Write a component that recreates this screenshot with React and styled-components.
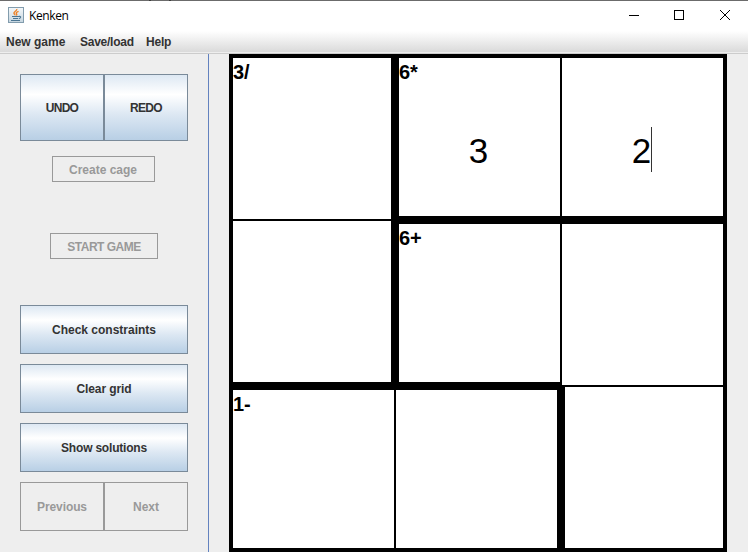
import React from "react";
import styled, { createGlobalStyle } from "styled-components";

const GlobalStyle = createGlobalStyle`
  * { box-sizing: border-box; }
  body { margin: 0; overflow: hidden; background: #eeeeee; }
`;

const Window = styled.div`
  width: 748px;
  height: 552px;
  display: flex;
  flex-direction: column;
  background: #eeeeee;
  font-family: "Liberation Sans", Arial, sans-serif;
  color: #333333;
`;

const TopEdge = styled.div`
  height: 1px;
  flex: none;
  background: linear-gradient(90deg, #6b6b6b 0 149px, #3c3c3c 149px 151px, #6b6b6b 151px 169px, #3c3c3c 169px 171px, #6b6b6b 171px);
`;

const TitleBar = styled.header`
  height: 30px;
  flex: none;
  display: flex;
  align-items: flex-start;
  padding: 6px 16px 0 8px;
  background: #ffffff;
`;

const Title = styled.span`
  flex: 1;
  margin-left: 5px;
  font: 12px/17px "Open Sans", "Noto Sans", sans-serif;
  letter-spacing: -0.4px;
  color: #000000;
`;

const Controls = styled.div`
  display: flex;
  gap: 35px;
  margin: 3px 2px 0 0;
  svg { display: block; }
  svg:last-child { margin-left: 1px; }
`;

const MenuBar = styled.nav`
  height: 23px;
  flex: none;
  display: flex;
  align-items: center;
  padding: 0 6px 1px;
  gap: 14px;
  font-size: 12px;
  font-weight: bold;
  background: linear-gradient(#ffffff, #dadada 21px, #eeeeee 21px 22px, #cccccc 22px);
`;

const MenuItem = styled.span`
  width: ${(p) => p.$width}px;
  letter-spacing: ${(p) => p.$tracking || 0}px;
  white-space: nowrap;
`;

const Body = styled.div`
  flex: 1;
  min-height: 0;
  display: flex;
`;

const Sidebar = styled.aside`
  width: 209px;
  padding: 20px 20px 0;
  border-right: 1px solid #6382bf;
  display: flex;
  flex-direction: column;
  align-items: flex-start;
`;

const ButtonRow = styled.div`
  display: flex;
  justify-content: center;
  width: ${(p) => p.$width || 168}px;
  margin-bottom: ${(p) => p.$after}px;
`;

const Button = styled.button`
  width: ${(p) => p.$width}px;
  height: ${(p) => p.$height}px;
  padding: ${(p) => p.$drop || 0}px ${(p) => p.$shift || 0}px 0 0;
  border: 1px solid #7a8a99;
  border-radius: 0;
  color: #333333;
  background: linear-gradient(#dde8f3 0%, #ffffff 30%, #dde8f3 60%, #b8cfe5 100%);
  font: bold 12px/14px "Liberation Sans", Arial, sans-serif;
  letter-spacing: ${(p) => p.$tracking || 0}px;
  white-space: nowrap;

  &:disabled {
    color: #999999;
    border-color: #999999;
    background: #eeeeee;
  }
`;

const Board = styled.main`
  margin-left: 20px;
  width: 498px;
  height: 498px;
  display: grid;
  grid-template: repeat(3, 166px) / repeat(3, 166px);
`;

const Cell = styled.div`
  position: relative;
  display: flex;
  align-items: center;
  justify-content: center;
  border: solid #000000;
  border-width: ${(p) => p.$walls.map((w) => `${w}px`).join(" ")};
  background: #ffffff;
`;

const CageLabel = styled.span`
  position: absolute;
  top: 3px;
  left: 0;
  font: bold 20px/23px "Liberation Sans", Arial, sans-serif;
  color: #000000;
`;

const Digit = styled.span`
  position: relative;
  margin-top: 26px;
  padding-top: 1px;
  margin-right: 2px;
  font-size: 35px;
  line-height: 44px;
  color: #000000;
`;

const Caret = styled.i`
  position: absolute;
  top: -1px;
  right: -1px;
  width: 1px;
  height: 45px;
  background: #333333;
`;

const cages = [
  [0, 1, 1],
  [0, 2, 2],
  [3, 3, 2],
];
const labels = { "0,0": "3/", "0,1": "6*", "1,1": "6+", "2,0": "1-" };
const values = { "0,1": "3", "0,2": "2" };
const active = "0,2";

const wallsOf = (r, c) =>
  [[r - 1, c], [r, c + 1], [r + 1, c], [r, c - 1]].map(([y, x]) =>
    cages[y]?.[x] === cages[r][c] ? 1 : 4
  );

const actions = [
  { text: "Check constraints", tracking: 0 },
  { text: "Clear grid", tracking: -0.1 },
  { text: "Show solutions", tracking: -0.2 },
];

function JavaIcon() {
  return (
    <svg width="16" height="16" viewBox="0 0 16 16">
      <defs>
        <linearGradient id="tile" x1="0" y1="0" x2="0" y2="1">
          <stop offset="0" stopColor="#f5f8fa" />
          <stop offset="1" stopColor="#c5d5df" />
        </linearGradient>
      </defs>
      <rect x=".5" y=".5" width="15" height="15" fill="url(#tile)" stroke="#829cad" />
      <path d="M8.8 2C9.2 4 5.4 4.6 6 6.4C6.4 7.2 7.2 7.5 7 8.4M10.6 4.4C8.2 5.2 7.8 6 8.6 7C9 7.6 8.8 8 8.4 8.5" fill="none" stroke="#ee8226" strokeWidth="1.4" />
      <path d="M4 9.5H10.5M5 11.5H10M3 13.5H12M10.5 9.5C13.5 8.7 13.3 11 10.8 11.7" fill="none" stroke="#4b7592" strokeWidth="1.1" />
    </svg>
  );
}

function WindowControls() {
  return (
    <Controls>
      <svg width="10" height="10" stroke="#000" fill="none"><path d="M0 5.5H10" /></svg>
      <svg width="10" height="10" stroke="#000" fill="none"><rect x=".5" y=".5" width="9" height="9" /></svg>
      <svg width="10" height="10" stroke="#000" fill="none"><path d="M0 0L10 10M10 0L0 10" /></svg>
    </Controls>
  );
}

export default function App() {
  return (
    <Window>
      <GlobalStyle />
      <TopEdge />
      <TitleBar>
        <JavaIcon />
        <Title>Kenken</Title>
        <WindowControls />
      </TitleBar>
      <MenuBar>
        <MenuItem $width={60}>New game</MenuItem>
        <MenuItem $width={52} $tracking={-0.25}>Save/load</MenuItem>
        <MenuItem $width={26} $tracking={-0.2}>Help</MenuItem>
      </MenuBar>
      <Body>
        <Sidebar>
          <ButtonRow $after={15}>
            <Button $width={84} $height={67} $tracking={-0.7}>UNDO</Button>
            <Button $width={84} $height={67} $tracking={-0.7}>REDO</Button>
          </ButtonRow>
          <ButtonRow $after={51} $width={167}>
            <Button $width={103} $height={26} $drop={1} $shift={1} disabled>Create cage</Button>
          </ButtonRow>
          <ButtonRow $after={46}>
            <Button $width={108} $height={26} $drop={1} $tracking={-0.5} disabled>START GAME</Button>
          </ButtonRow>
          {actions.map(({ text, tracking }) => (
            <ButtonRow key={text} $after={10}>
              <Button $width={168} $height={49} $tracking={tracking}>{text}</Button>
            </ButtonRow>
          ))}
          <ButtonRow $after={0}>
            <Button $width={84} $height={49} $tracking={-0.1} disabled>Previous</Button>
            <Button $width={84} $height={49} disabled>Next</Button>
          </ButtonRow>
        </Sidebar>
        <Board>
          {cages.flatMap((row, r) =>
            row.map((_, c) => {
              const key = `${r},${c}`;
              return (
                <Cell key={key} $walls={wallsOf(r, c)}>
                  {labels[key] && <CageLabel>{labels[key]}</CageLabel>}
                  {values[key] && (
                    <Digit>
                      {values[key]}
                      {key === active && <Caret />}
                    </Digit>
                  )}
                </Cell>
              );
            })
          )}
        </Board>
      </Body>
    </Window>
  );
}
